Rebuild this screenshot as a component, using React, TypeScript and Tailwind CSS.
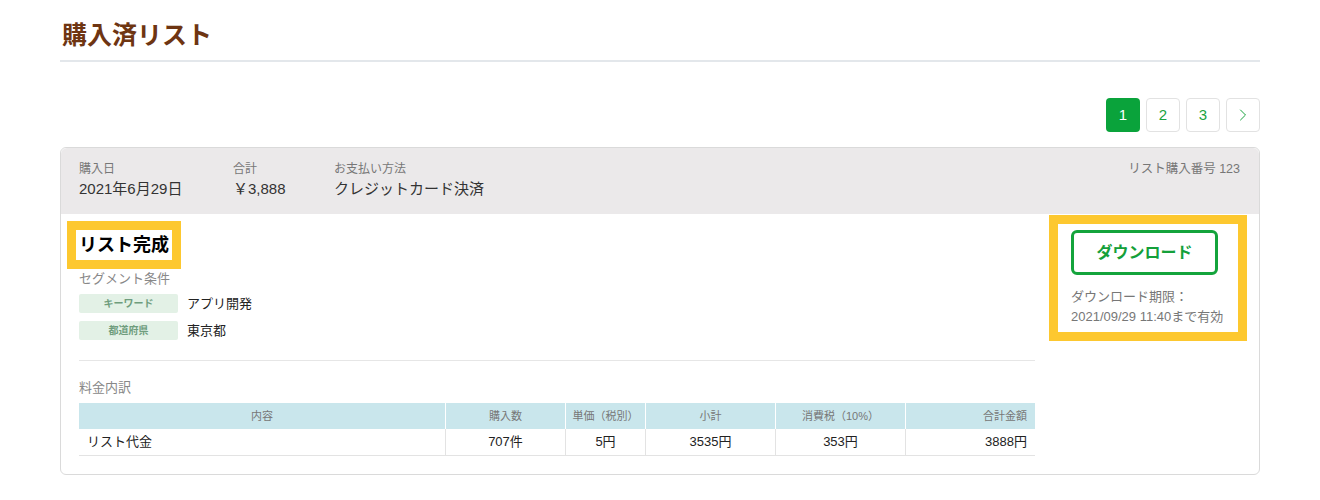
import { ChevronRight } from 'lucide-react'

const font = { fontFamily: '"Liberation Sans", "Noto Sans CJK JP", sans-serif' }

const columns = [
  { label: '内容', value: 'リスト代金', w: 'w-[366px]', head: 'text-center', body: 'text-left pl-[8px]' },
  { label: '購入数', value: '707件', w: 'w-[120px]', head: 'text-center', body: 'text-center' },
  { label: '単価（税別）', value: '5円', w: 'w-[80px]', head: 'text-center', body: 'text-center' },
  { label: '小計', value: '3535円', w: 'w-[130px]', head: 'text-center', body: 'text-center' },
  { label: '消費税（10%）', value: '353円', w: 'w-[130px]', head: 'text-center', body: 'text-center' },
  { label: '合計金額', value: '3888円', w: 'w-[130px]', head: 'text-right pr-[8px]', body: 'text-right pr-[8px]' },
]

const segments = [
  { tag: 'キーワード', value: 'アプリ開発' },
  { tag: '都道府県', value: '東京都' },
]

function Pagination() {
  return (
    <div className="mt-[36px] flex justify-end gap-[6px]">
      <button className="w-[34px] h-[34px] rounded-[4px] bg-[#0aa33b] text-white text-[15px]">1</button>
      {['2', '3'].map(n => (
        <button
          key={n}
          className="w-[34px] h-[34px] rounded-[4px] border border-[#e2e2e2] bg-white text-[#1aa33f] text-[15px]"
        >
          {n}
        </button>
      ))}
      <button className="w-[34px] h-[34px] rounded-[4px] border border-[#e2e2e2] bg-white text-[#1aa33f] flex items-center justify-center">
        <ChevronRight size={20} strokeWidth={1.2} />
      </button>
    </div>
  )
}

function CardHeader() {
  return (
    <div className="h-[66px] bg-[#ebe9ea] flex pl-[18px] pr-[19px] pt-[13px] rounded-t-[6px]">
      <div className="w-[154px]">
        <div className="text-[12px] leading-[16px] text-[#777]">購入日</div>
        <div className="text-[15px] leading-[22px] mt-[1px] text-[#333]">2021年6月29日</div>
      </div>
      <div className="w-[101px]">
        <div className="text-[12px] leading-[16px] text-[#777]">合計</div>
        <div className="text-[15px] leading-[22px] mt-[1px] text-[#333]">￥3,888</div>
      </div>
      <div className="flex-1">
        <div className="text-[12px] leading-[16px] text-[#777]">お支払い方法</div>
        <div className="text-[15px] leading-[22px] mt-[1px] text-[#333]">クレジットカード決済</div>
      </div>
      <div className="text-[12.5px] leading-[16px] text-[#777]">リスト購入番号 123</div>
    </div>
  )
}

function PriceTable() {
  return (
    <div className="mt-[6px] w-[956px]">
      <div className="flex h-[26px] bg-[#c9e6ec]">
        {columns.map((c, i) => (
          <div
            key={c.label}
            className={`${c.w} ${c.head} ${i > 0 ? 'border-l border-white' : ''} text-[11px] leading-[26px] text-[#777]`}
          >
            {c.label}
          </div>
        ))}
      </div>
      <div className="flex h-[27px] border-b border-[#e3e3e3]">
        {columns.map((c, i) => (
          <div
            key={c.label}
            className={`${c.w} ${c.body} ${i > 0 ? 'border-l border-[#e3e3e3]' : ''} text-[13px] leading-[26px] text-[#222]`}
          >
            {c.value}
          </div>
        ))}
      </div>
    </div>
  )
}

export default function App() {
  return (
    <div className="w-[1320px] h-[500px] bg-white px-[60px] pt-[20px]" style={font}>
      <h1 className="text-[25px] font-bold leading-[30px] text-[#6e3512] pl-[2px] pb-[10px] border-b-2 border-[#e3e7eb]">
        購入済リスト
      </h1>

      <Pagination />

      <div className="mt-[15px] rounded-[6px] border border-[#dadada]">
        <CardHeader />
        <div className="flex pb-[18px]">
          <div className="w-[956px] ml-[18px] pt-[16px]">
            <div className="inline-block px-[3px] -ml-[3px] text-[18px] font-bold leading-[30px] text-black outline-[9px] outline-solid outline-[#fdc82f]">
              リスト完成
            </div>
            <div className="mt-[10px] text-[13px] leading-[18px] text-[#888]">セグメント条件</div>
            <div className="mt-[6px] flex flex-col gap-[7px]">
              {segments.map(s => (
                <div key={s.tag} className="flex items-center gap-[9px]">
                  <span className="w-[99px] h-[19px] rounded-[2px] bg-[#e3f1e6] text-[10px] font-bold leading-[19px] text-center text-[#6f9d7d]">
                    {s.tag}
                  </span>
                  <span className="text-[13px] text-[#222]">{s.value}</span>
                </div>
              ))}
            </div>
            <div className="mt-[20px] border-t border-[#e6e6e6]" />
            <div className="mt-[18px] text-[13px] leading-[18px] text-[#888]">料金内訳</div>
            <PriceTable />
          </div>

          <div className="ml-[23px] mt-[10px] w-[180px] h-[108px] pl-[13px] pt-[6px] outline-[9px] outline-solid outline-[#fdc82f]">
            <button className="w-[147px] h-[45px] rounded-[6px] border-[3px] border-[#14a43c] text-[16px] font-bold text-[#14a03a]">
              ダウンロード
            </button>
            <div className="mt-[12px] text-[13px] leading-[20px] text-[#777] whitespace-nowrap">
              ダウンロード期限：
              <br />
              2021/09/29 11:40まで有効
            </div>
          </div>
        </div>
      </div>
    </div>
  )
}
